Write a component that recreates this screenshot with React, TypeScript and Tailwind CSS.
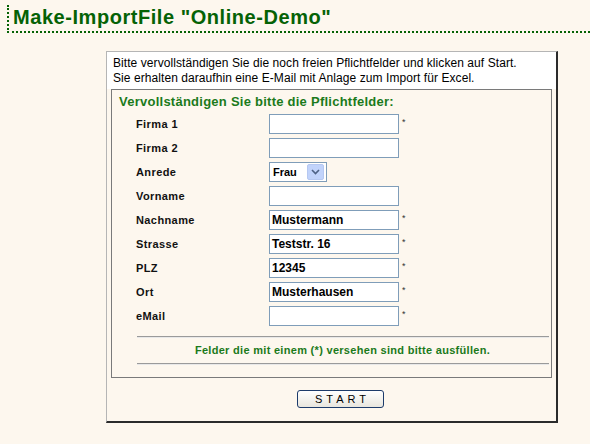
import React from "react";

const rows: { label: string; value?: string; star?: boolean; select?: boolean }[] = [
  { label: "Firma 1", star: true },
  { label: "Firma 2" },
  { label: "Anrede", select: true },
  { label: "Vorname" },
  { label: "Nachname", value: "Mustermann", star: true },
  { label: "Strasse", value: "Teststr. 16", star: true },
  { label: "PLZ", value: "12345", star: true },
  { label: "Ort", value: "Musterhausen", star: true },
  { label: "eMail", star: true },
];

export default function App() {
  return (
    <div className="w-[590px] h-[444px] bg-[#fdf7ee] overflow-hidden font-['Liberation_Sans',Arial,sans-serif] text-black">
      <div className="ml-[7px] mt-[5px] h-[28px] border-l-2 border-b-2 border-dotted border-[#056205] pl-[4px]">
        <div className="text-[20px] leading-[24px] font-bold text-[#056205] tracking-[0.55px]">Make-ImportFile "Online-Demo"</div>
      </div>
      <div className="ml-[106px] mt-[18px] w-[452px] h-[372px] border-l border-t border-[#b5b5b5] border-r-2 border-b-2 border-r-[#2b2b2b] border-b-[#2b2b2b] flex flex-col">
        <div className="bg-white px-[6px] pt-[4px] pb-[3px] text-[12px] leading-[15px] tracking-[0.07px]">
          <div>Bitte vervollständigen Sie die noch freien Pflichtfelder und klicken auf Start.</div>
          <div>Sie erhalten daraufhin eine E-Mail mit Anlage zum Import für Excel.</div>
        </div>
        <div className="mx-[4px] h-[289px] border border-[#7a7a7a] flex flex-col">
          <div className="pl-[7px] pt-[4px] text-[13px] leading-[16px] font-bold text-[#1b7a1b] tracking-[0.25px]">
            Vervollständigen Sie bitte die Pflichtfelder:
          </div>
          <div className="mt-[4px] pl-[24px] flex flex-col gap-[4px]">
            {rows.map((r) => (
              <div key={r.label} className="flex items-center h-[20px]">
                <div className="w-[133px] text-[11px] font-bold tracking-[0.4px] text-[#111]">{r.label}</div>
                {r.select ? (
                  <div className="h-[20px] w-[58px] border border-[#7f9db9] bg-white flex items-center pl-[3px] pr-[2px] justify-between">
                    <span className="text-[11px] font-bold">Frau</span>
                    <span className="w-[17px] h-[16px] bg-[#c1d3fb] border border-[#b6c8f1] rounded-[2px] flex items-center justify-center">
                      <svg width="9" height="6" viewBox="0 0 9 6">
                        <path d="M1 1 L4.5 4.5 L8 1" stroke="#4d6185" strokeWidth="1.6" fill="none" />
                      </svg>
                    </span>
                  </div>
                ) : (
                  <div className="h-[20px] w-[130px] border border-[#7f9db9] bg-white flex items-center pl-[2px] text-[12px] font-bold">
                    {r.value ?? ""}
                  </div>
                )}
                {r.star && <span className="ml-[3px] text-[9px] leading-none text-[#333] -mt-[3px]">*</span>}
              </div>
            ))}
          </div>
          <div className="mt-[10px] ml-[25px] mr-[2px] border-t border-t-[#9a9a9a] border-b border-b-[#e8e8e8]" />
          <div className="text-center text-[11px] leading-[25px] font-bold text-[#1b7a1b] tracking-[0.3px] pl-[22px]">
            Felder die mit einem (*) versehen sind bitte ausfüllen.
          </div>
          <div className="ml-[25px] mr-[2px] border-t border-t-[#9a9a9a] border-b border-b-[#e8e8e8]" />
        </div>
        <div className="flex justify-center mt-[12px] pl-[18px]">
          <div className="w-[87px] h-[18px] border border-[#1c3b6b] rounded-[3px] bg-gradient-to-b from-white to-[#e8e6de] flex items-center justify-center text-[11px] tracking-[4px] pl-[4px]">
            START
          </div>
        </div>
      </div>
    </div>
  );
}
